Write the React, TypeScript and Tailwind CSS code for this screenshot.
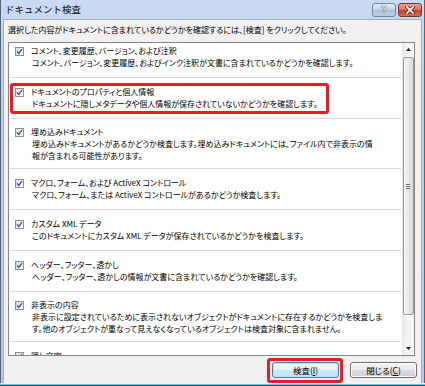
type Item = {
  title: string;
  lines: string[];
};

const items: Item[] = [
  {
    title: "コメント、変更履歴、バージョン、および注釈",
    lines: ["コメント、バージョン、変更履歴、およびインク注釈が文書に含まれているかどうかを確認します。"],
  },
  {
    title: "ドキュメントのプロパティと個人情報",
    lines: ["ドキュメントに隠しメタデータや個人情報が保存されていないかどうかを確認します。"],
  },
  {
    title: "埋め込みドキュメント",
    lines: [
      "埋め込みドキュメントがあるかどうか検査します。埋め込みドキュメントには、ファイル内で非表示の情",
      "報が含まれる可能性があります。",
    ],
  },
  {
    title: "マクロ、フォーム、および ActiveX コントロール",
    lines: ["マクロ、フォーム、または ActiveX コントロールがあるかどうか検査します。"],
  },
  {
    title: "カスタム XML データ",
    lines: ["このドキュメントにカスタム XML データが保存されているかどうかを検査します。"],
  },
  {
    title: "ヘッダー、フッター、透かし",
    lines: ["ヘッダー、フッター、透かしの情報が文書に含まれているかどうかを確認します。"],
  },
  {
    title: "非表示の内容",
    lines: [
      "非表示に設定されているために表示されないオブジェクトがドキュメントに存在するかどうかを検査しま",
      "す。他のオブジェクトが重なって見えなくなっているオブジェクトは検査対象に含まれません。",
    ],
  },
  {
    title: "隠し文字",
    lines: ["文書に隠し文字として書式設定されたテキストが含まれているかどうかを確認します。"],
  },
];

function CheckBox() {
  return (
    <span className="flex h-[9px] w-[9px] shrink-0 items-center justify-center border border-[#8e8f8f] bg-[linear-gradient(135deg,#dcdcdc,#ffffff)]">
      <svg width="7" height="7" viewBox="0 0 7 7">
        <path d="M1 3.4 L2.8 5.4 L6 1.2" fill="none" stroke="#2b4b9b" strokeWidth="1.3" />
      </svg>
    </span>
  );
}

function Section({ item, index }: { item: Item; index: number }) {
  const twoLines = item.lines.length > 1;
  return (
    <div
      className={`relative mx-[1px] border-b border-[#dadada] ${
        twoLines ? "pt-[7px] pb-[6px]" : "pt-[8px] pb-[8px]"
      }`}
    >
      <div className="flex h-[12px] items-center pl-[5px]">
        <CheckBox />
        <span className="ml-[7px] whitespace-nowrap">{item.title}</span>
      </div>
      {item.lines.map((line) => (
        <div className="h-[12px] whitespace-nowrap pl-[22px]" key={line}>
          {line}
        </div>
      ))}
      {index === 1 ? (
        <div className="pointer-events-none absolute left-0 top-[5px] h-[31px] w-[319px] rounded-[3px] border-[3px] border-[#ec1c24]" />
      ) : null}
    </div>
  );
}

function ScrollBar() {
  return (
    <div className="flex w-[12px] shrink-0 flex-col bg-[linear-gradient(90deg,#e6e6e6,#f5f5f5_40%,#f5f5f5)]">
      <div className="flex h-[13px] items-center justify-center">
        <svg width="5" height="3" viewBox="0 0 5 3">
          <path d="M0 3 L2.5 0 L5 3 Z" fill="#1e1e1e" />
        </svg>
      </div>
      <div className="flex-1">
        <div className="mx-auto mt-[1px] flex h-[258px] w-[11px] items-center justify-center rounded-[2px] border border-[#9a9a9a] bg-[linear-gradient(90deg,#f4f4f4,#e8e8e8_50%,#d6d6d6)]">
          <div className="flex flex-col gap-[1px]">
            <span className="h-[1px] w-[4px] bg-[#707070]" />
            <span className="h-[1px] w-[4px] bg-[#707070]" />
            <span className="h-[1px] w-[4px] bg-[#707070]" />
          </div>
        </div>
      </div>
      <div className="flex h-[13px] items-center justify-center">
        <svg width="5" height="3" viewBox="0 0 5 3">
          <path d="M0 0 L5 0 L2.5 3 Z" fill="#1e1e1e" />
        </svg>
      </div>
    </div>
  );
}

export default function App() {
  return (
    <div className="flex h-[386px] w-[425px] flex-col bg-[linear-gradient(#c9dbf0,#b8cfe9_30%,#b4cce7)] px-[3px] font-['Noto_Sans_CJK_JP','Liberation_Sans',sans-serif] text-black shadow-[inset_1px_0_0_#55657a,inset_-1px_0_0_#55657a]">
      <div className="flex h-[19px] shrink-0 items-start">
        <span className="pl-[2px] pt-[3px] text-[9.5px] leading-[12px] text-[#0b0b0b]">
          ドキュメント検査
        </span>
        <div className="ml-auto mt-[3px] flex gap-[2px]">
          <div className="flex h-[14px] w-[24px] items-center justify-center rounded-[3px] border border-[#6f86a3] bg-[linear-gradient(#e2ecf7,#c3d5ea_50%,#a9c0dc_51%,#bcd0e8)]">
            <span className="font-['Liberation_Sans',sans-serif] text-[10px] font-bold leading-none text-white [text-shadow:0_0_1px_#1d2c44,0_0_1px_#1d2c44]">
              ?
            </span>
          </div>
          <div className="flex h-[14px] w-[24px] items-center justify-center rounded-[3px] border border-[#7b2f25] bg-[linear-gradient(#eaa596,#d8705e_50%,#c3412c_51%,#d66a4f)]">
            <svg width="10" height="8" viewBox="0 0 10 8">
              <path d="M2 1 L8 7 M8 1 L2 7" stroke="#4c1209" strokeWidth="3.2" strokeLinecap="square" />
              <path d="M2 1 L8 7 M8 1 L2 7" stroke="#ffffff" strokeWidth="1.8" strokeLinecap="square" />
            </svg>
          </div>
        </div>
      </div>

      <div className="flex h-[364px] shrink-0 flex-col border-x border-t border-[#9fb0c6] bg-[#f0f0f0] text-[8px] leading-[12px] [font-feature-settings:'palt']">
        <div className="h-[22px] shrink-0 whitespace-nowrap pl-[4px] pt-[4px]">
          選択した内容がドキュメントに含まれているかどうかを確認するには、[検査] をクリックしてください。
        </div>

        <div className="ml-[4px] flex h-[314px] w-[407px] shrink-0 border border-[#828790] bg-white">
          <div className="flex-1 overflow-hidden">
            <div className="-mt-[6px]">
              {items.map((item, i) => (
                <Section item={item} index={i} key={item.title} />
              ))}
            </div>
          </div>
          <ScrollBar />
        </div>

        <div className="mt-[6px] flex justify-end gap-[11px] pr-[4px]">
          <div className="relative">
            <button
              type="button"
              className="flex h-[16px] w-[67px] items-center justify-center rounded-[3px] border border-[#3c7fb1] bg-[linear-gradient(#f2f8fd,#e3f1fb_50%,#cfe7f7_51%,#c4e1f5)] text-[8.5px] leading-none shadow-[inset_0_0_0_1px_#bfe4fa]"
            >
              検査(<span className="underline">I</span>)
            </button>
            <div className="pointer-events-none absolute -left-[5px] -top-[4px] h-[25px] w-[76px] rounded-[3px] border-[3px] border-[#ec1c24]" />
          </div>
          <button
            type="button"
            className="flex h-[16px] w-[67px] items-center justify-center rounded-[3px] border border-[#707070] bg-[linear-gradient(#f2f2f2,#ebebeb_50%,#dddddd_51%,#cfcfcf)] text-[8.5px] leading-none shadow-[inset_0_0_0_1px_#fcfcfc]"
          >
            閉じる(<span className="underline">C</span>)
          </button>
        </div>
      </div>

      <div className="-mx-[3px] h-[3px] shrink-0 bg-[linear-gradient(#f0f0f0,#f0f0f0_1px,#62cdea_1px,#62cdea_2px,#3a4a58_2px)]" />
    </div>
  );
}
